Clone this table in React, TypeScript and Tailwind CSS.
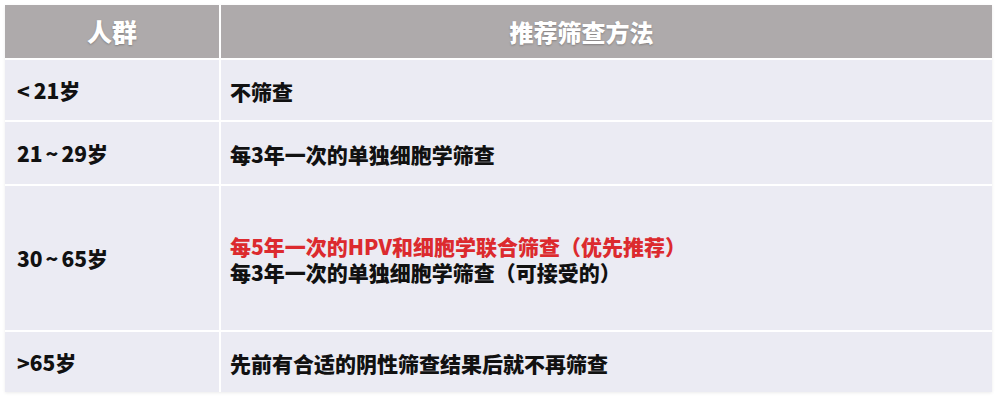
export default function App() {
  const rows = [
    { age: <><span className="mr-[4px]">&lt;</span>21岁</>, h: 'h-[60px]', lines: [{ text: '不筛查', red: false }] },
    { age: <>21<span className="mx-[3px]">~</span>29岁</>, h: 'h-[62px]', lines: [{ text: '每3年一次的单独细胞学筛查', red: false }] },
    {
      age: <>30<span className="mx-[3px]">~</span>65岁</>,
      h: 'h-[144px]',
      lines: [
        { text: '每5年一次的HPV和细胞学联合筛查（优先推荐）', red: true },
        { text: '每3年一次的单独细胞学筛查（可接受的）', red: false },
      ],
    },
    { age: <>&gt;65岁</>, h: 'h-[60px]', lines: [{ text: '先前有合适的阴性筛查结果后就不再筛查', red: false }] },
  ];

  return (
    <div className="w-[996px] h-[400px] bg-white pl-[5px] pt-[5px] font-['Noto_Sans_CJK_SC',sans-serif] font-black">
      <div className="w-[987px] grid grid-cols-[214px_1fr] gap-[2px] bg-white shadow-[0_1px_3px_rgba(0,0,0,0.08)]">
        {/* header */}
        <div className="h-[53px] bg-[#aeaaab] flex items-center justify-center text-white text-[25px] [text-shadow:0_1px_2px_rgba(0,0,0,0.25)]">
          人群
        </div>
        <div className="h-[53px] bg-[#aeaaab] flex items-center justify-center text-white text-[24px] [text-shadow:0_1px_2px_rgba(0,0,0,0.25)] pr-[50px]">
          推荐筛查方法
        </div>

        {rows.map((row, i) => (
          <div key={i} className="contents">
            <div className={`${row.h} bg-[#ebebf3] flex items-center pl-[12px] text-[21px] text-[#111] pt-[2px]`}>
              {row.age}
            </div>
            <div className={`${row.h} bg-[#ebebf3] flex flex-col justify-center pl-[9px] text-[21px] leading-[26px] pt-[2px]`}>
              {row.lines.map((line, j) => (
                <div key={j} className={line.red ? 'text-[#dc2a2e]' : 'text-[#111]'}>
                  {line.text}
                </div>
              ))}
            </div>
          </div>
        ))}
      </div>
    </div>
  );
}
